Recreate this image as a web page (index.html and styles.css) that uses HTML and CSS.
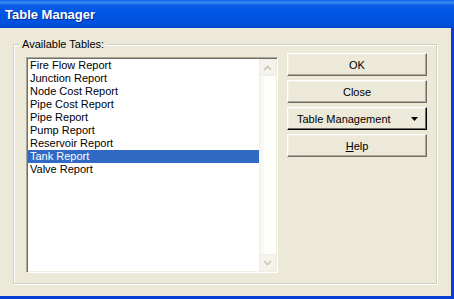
FILE: index.html
```html
<!DOCTYPE html>
<html>
<head>
<meta charset="utf-8">
<link rel="stylesheet" href="styles.css">
</head>
<body>
<div class="window">
  <div class="titlebar"><span class="title">Table Manager</span></div>
  <div class="client">
    <div class="group">
      <span class="group-label">Available Tables:</span>
      <div class="listbox">
        <ul class="items">
          <li>Fire Flow Report</li>
          <li>Junction Report</li>
          <li>Node Cost Report</li>
          <li>Pipe Cost Report</li>
          <li>Pipe Report</li>
          <li>Pump Report</li>
          <li>Reservoir Report</li>
          <li class="selected">Tank Report</li>
          <li>Valve Report</li>
        </ul>
        <div class="scrollbar">
          <div class="arrow">
            <svg width="9" height="6" viewBox="0 0 9 6"><path d="M1 5 L4.5 1.5 L8 5" fill="none" stroke="#c9c6b6" stroke-width="1.6"/></svg>
          </div>
          <div class="track"></div>
          <div class="arrow">
            <svg width="9" height="6" viewBox="0 0 9 6"><path d="M1 1 L4.5 4.5 L8 1" fill="none" stroke="#c9c6b6" stroke-width="1.6"/></svg>
          </div>
        </div>
      </div>
      <div class="buttons">
        <button class="btn">OK</button>
        <button class="btn">Close</button>
        <button class="btn btn-menu"><span>Table Management</span><svg width="7" height="4" viewBox="0 0 7 4"><path d="M0 0 H7 L3.5 4 Z" fill="#000"/></svg></button>
        <button class="btn"><span class="ul">H</span>elp</button>
      </div>
    </div>
  </div>
</div>
</body>
</html>
```

FILE: styles.css
```css
html, body {
  margin: 0;
  padding: 0;
  width: 454px;
  height: 299px;
  overflow: hidden;
}

.window {
  width: 454px;
  height: 299px;
  background: #0a3fd6;
  display: flex;
  flex-direction: column;
  font-family: "Liberation Sans", Arial, sans-serif;
  font-size: 11px;
  color: #000;
}

.titlebar {
  height: 28px;
  flex: none;
  display: flex;
  align-items: center;
  padding-left: 5px;
  background: linear-gradient(to bottom, #0a5fe8 0%, #3d8cf5 8%, #0a5ce8 20%, #0055e5 50%, #0052e0 80%, #0046cc 100%);
}

.title {
  color: #fff;
  font-weight: bold;
  font-size: 13px;
  text-shadow: 1px 1px 0 #0b2b8c;
  margin-top: 1px;
}

.client {
  flex: 1;
  background: #ece9d8;
  margin: 0 3px 3px 0;
  padding: 16px 0 0 13px;
}

.group {
  position: relative;
  width: 424px;
  height: 240px;
  box-sizing: border-box;
  border: 1px solid #d0d0bf;
  box-shadow: 1px 1px 0 #fff, inset 1px 1px 0 #fff;
  display: flex;
  align-items: flex-start;
  padding: 8px 0 0 12px;
  gap: 9px;
}

.group-label {
  position: absolute;
  top: -7px;
  left: 6px;
  padding: 0 2px;
  background: #ece9d8;
  line-height: 13px;
}

.listbox {
  margin-top: 4px;
  width: 252px;
  height: 216px;
  box-sizing: border-box;
  border-style: solid;
  border-width: 1px;
  border-color: #aca899 #fff #fff #aca899;
  box-shadow: inset 1px 1px 0 #716f64, inset -1px -1px 0 #f1efe2;
  background: #fff;
  padding: 1px;
  display: flex;
}

.items {
  list-style: none;
  margin: 0;
  padding: 0;
  flex: 1;
}

.items li {
  height: 13px;
  line-height: 13px;
  padding-left: 2px;
  white-space: nowrap;
}

.items li.selected {
  background: #316ac5;
  color: #fff;
}

.scrollbar {
  width: 17px;
  display: flex;
  flex-direction: column;
  background: linear-gradient(to right, #f3f1ea, #fefefb 40%, #fdfdfa);
}

.arrow {
  width: 17px;
  height: 17px;
  box-sizing: border-box;
  border: 1px solid #eeede5;
  background: #f4f3ee;
  display: flex;
  align-items: center;
  justify-content: center;
}

.track {
  flex: 1;
}

.buttons {
  display: flex;
  flex-direction: column;
  gap: 4px;
}

.btn {
  width: 140px;
  height: 23px;
  box-sizing: border-box;
  font-family: "Liberation Sans", Arial, sans-serif;
  font-size: 11px;
  color: #000;
  background: #ece9d8;
  border-style: solid;
  border-width: 1px;
  border-color: #fff #716f64 #716f64 #fff;
  box-shadow: inset -1px -1px 0 #aca899, inset 1px 1px 0 #f1efe2;
  padding: 0;
  display: flex;
  align-items: center;
  justify-content: center;
}

.btn-menu {
  justify-content: space-between;
  padding: 0 8px 0 9px;
  border-color: #fff #000 #000 #fff;
  box-shadow: inset -1px -1px 0 #716f64, inset 1px 1px 0 #f1efe2;
}

.ul {
  text-decoration: underline;
}
```
